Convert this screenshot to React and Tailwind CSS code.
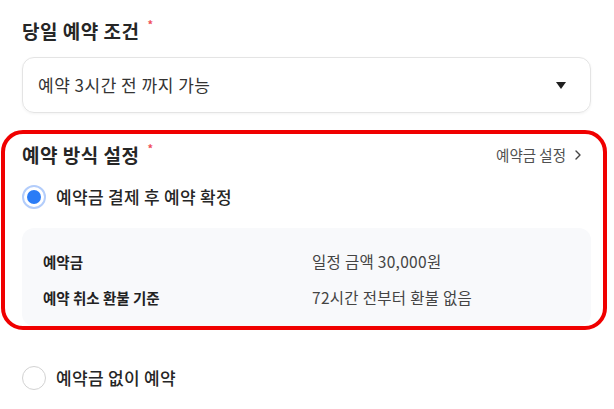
const FONT = 'font-["Noto_Sans_CJK_KR","Noto_Sans",sans-serif]'

function Caret() {
  return (
    <svg width="10" height="7" viewBox="0 0 10 7" className="shrink-0">
      <path d="M0 0h10L5 7z" fill="#1f1f1f" />
    </svg>
  )
}

function Chevron() {
  return (
    <svg width="8" height="12" viewBox="0 0 8 12" fill="none" stroke="#444" strokeWidth="1.4" strokeLinecap="round" strokeLinejoin="round">
      <path d="M2 2l4 4-4 4" />
    </svg>
  )
}

function Radio({ checked }) {
  if (checked) {
    return (
      <span className="w-6 h-6 rounded-full border-2 border-[#b3cdfb] flex items-center justify-center shrink-0">
        <span className="w-[14px] h-[14px] rounded-full bg-[#2b7cf6]" />
      </span>
    )
  }
  return <span className="w-6 h-6 rounded-full border-[1.5px] border-[#d2d2d2] bg-white shrink-0" />
}

function Label({ children }) {
  return (
    <div className="flex items-start h-6">
      <span className="text-[19px] tracking-[0.5px] leading-6 font-semibold text-[#262626]">{children}</span>
      <span className="ml-[8px] -mt-[1px] text-[11px] leading-3 font-bold text-[#f0505a]">*</span>
    </div>
  )
}

const DEPOSIT = [
  { k: '예약금', v: '일정 금액 30,000원' },
  { k: '예약 취소 환불 기준', v: '72시간 전부터 환불 없음' },
]

export default function App() {
  return (
    <div className={`${FONT} w-[614px] h-[409px] bg-white overflow-hidden px-[22px] pt-[19px] pr-[23px]`}>
      {/* 당일 예약 조건 */}
      <Label>당일 예약 조건</Label>
      <div className="mt-[14px] h-[56px] rounded-xl border border-[#e4e4e4] shadow-[0_1px_3px_rgba(0,0,0,0.05)] flex items-center justify-between pl-[15px] pr-[24px]">
        <span className="text-[17px] tracking-[0.5px] text-[#333]">예약 3시간 전 까지 가능</span>
        <Caret />
      </div>

      {/* 예약 방식 설정 */}
      <div className="mt-[17px] -ml-[21px] -mr-[16px] border-4 border-[#f00000] rounded-[22px] pl-[17px] pr-[12px] pt-[9px]">
        <div className="flex items-center justify-between">
          <Label>예약 방식 설정</Label>
          <div className="flex items-center gap-[8px] pr-[9px] text-[14.5px] text-[#505050]">
            예약금 설정
            <Chevron />
          </div>
        </div>

        <div className="mt-[18px] flex items-center gap-[10px] h-6">
          <Radio checked />
          <span className="text-[17px] tracking-[0.3px] font-medium text-[#262626]">예약금 결제 후 예약 확정</span>
        </div>

        <div className="mt-[19px] rounded-xl bg-[#f8f9fb] pl-[21px] pt-[24px] pb-[18px] flex flex-col gap-4">
          {DEPOSIT.map((d) => (
            <div key={d.k} className="flex h-5 items-center">
              <span className="w-[269px] text-[14.5px] font-bold text-[#222]">{d.k}</span>
              <span className="text-[15.5px] tracking-[0.3px] text-[#444]">{d.v}</span>
            </div>
          ))}
        </div>
      </div>

      <div className="mt-[36px] flex items-center gap-[10px] h-6">
        <Radio />
        <span className="text-[17px] tracking-[0.3px] font-medium text-[#262626]">예약금 없이 예약</span>
      </div>
    </div>
  )
}
